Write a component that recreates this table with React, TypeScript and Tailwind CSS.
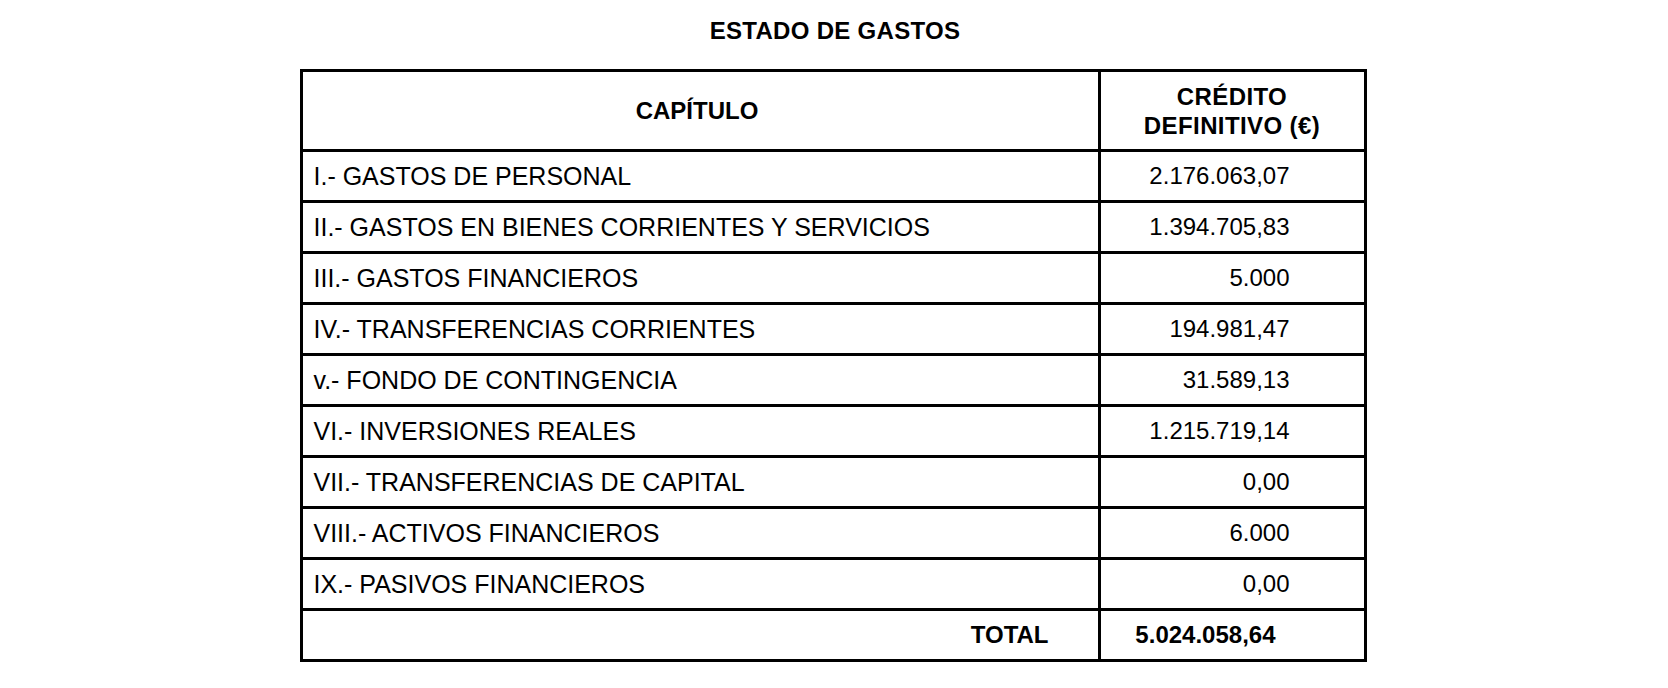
import React from "react";

const rows: [string, string][] = [
  ["I.- GASTOS DE PERSONAL", "2.176.063,07"],
  ["II.- GASTOS EN BIENES CORRIENTES Y SERVICIOS", "1.394.705,83"],
  ["III.- GASTOS FINANCIEROS", "5.000"],
  ["IV.- TRANSFERENCIAS CORRIENTES", "194.981,47"],
  ["v.- FONDO DE CONTINGENCIA", "31.589,13"],
  ["VI.- INVERSIONES REALES", "1.215.719,14"],
  ["VII.- TRANSFERENCIAS DE CAPITAL", "0,00"],
  ["VIII.- ACTIVOS FINANCIEROS", "6.000"],
  ["IX.- PASIVOS FINANCIEROS", "0,00"],
];

export default function App() {
  return (
    <div
      className="w-[1668px] h-[688px] bg-white text-black flex flex-col items-center"
      style={{ fontFamily: '"Liberation Sans", Arial, sans-serif' }}
    >
      <div className="mt-[19px] text-[24px] leading-[24px] font-bold tracking-[0.3px] ml-[2px]">
        ESTADO DE GASTOS
      </div>
      <div className="mt-[26px] w-[1067px] ml-[-2px] border-[3px] border-black flex flex-col">
        <div className="flex h-[77px]">
          <div className="w-[795px] flex items-center justify-center text-[24px] font-bold pr-[6px]">
            CAPÍTULO
          </div>
          <div className="flex-1 border-l-[3px] border-black flex items-center justify-center text-center text-[24px] leading-[29px] font-bold tracking-[0.4px]">
            <div>
              CRÉDITO
              <br />
              DEFINITIVO (€)
            </div>
          </div>
        </div>
        {rows.map(([label, value]) => (
          <div key={label} className="flex h-[51px] border-t-[3px] border-black">
            <div className="w-[795px] flex items-center pl-[11px] text-[25px] leading-[48px] whitespace-nowrap">
              {label}
            </div>
            <div className="flex-1 border-l-[3px] border-black flex items-center justify-end pr-[74px] text-[24px] leading-[48px]">
              {value}
            </div>
          </div>
        ))}
        <div className="flex h-[51px] border-t-[3px] border-black">
          <div className="w-[795px] flex items-center justify-end pr-[49px] text-[24px] font-bold">
            TOTAL
          </div>
          <div className="flex-1 border-l-[3px] border-black flex items-center justify-end pr-[88px] text-[24px] font-bold">
            5.024.058,64
          </div>
        </div>
      </div>
    </div>
  );
}
